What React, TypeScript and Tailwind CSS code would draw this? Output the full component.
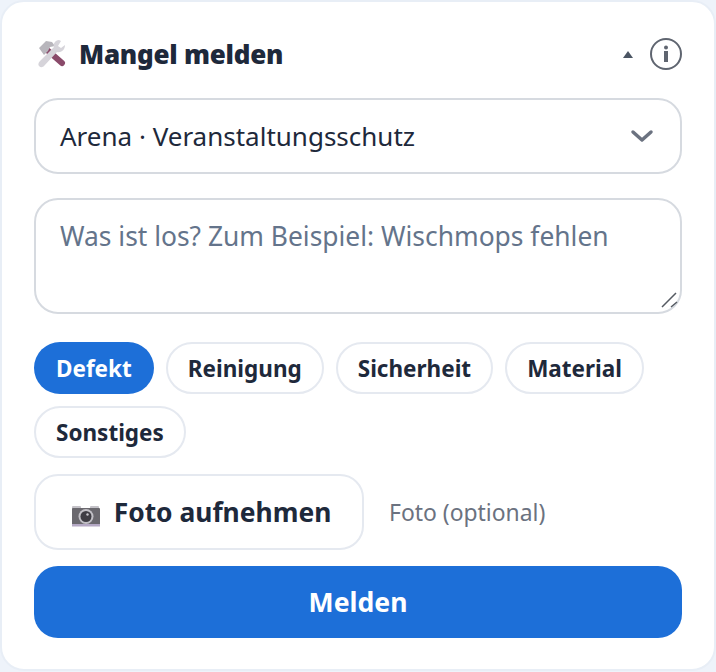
import React from 'react';

const categories = ['Defekt', 'Reinigung', 'Sicherheit', 'Material', 'Sonstiges'];

// Hammer and wrench, drawn because the installed emoji font looks different
const ToolsIcon = () => (
  <svg width="32" height="32" viewBox="0 0 32 32" className="ml-[1px]">
    <path d="M11 11 L27 25" stroke="#8a4a6a" strokeWidth="6" strokeLinecap="round" />
    <path d="M4 10 L11 3 L17 4 L20 8 L15 9 L13 13 L9 17 Z" fill="#b8b6bc" />
    <path d="M24 2 C20 2 18 6 19 9 L5 23 C3 25 3 27 4 28 C6 30 8 29 9 28 L22 14 C26 15 30 12 30 7 L26 10 L23 8 L26 3 Z" fill="#d6d4da" />
  </svg>
);

const CameraIcon = () => (
  <svg width="30" height="22" viewBox="0 0 30 22" className="translate-y-[3px]">
    <rect x="1" y="1" width="9" height="4" rx="1" fill="#c4c2c8" />
    <rect x="19" y="1" width="9" height="4" rx="1" fill="#c4c2c8" />
    <rect x="1" y="3" width="28" height="17" rx="1" fill="#6a686e" />
    <rect x="1" y="19" width="28" height="2.5" fill="#b4a8c4" />
    <circle cx="15" cy="11.5" r="7.5" fill="#c2c0c6" />
    <circle cx="15" cy="11.5" r="5.5" fill="#3f3d44" />
    <circle cx="16.5" cy="9.5" r="1.2" fill="#c8c6cc" />
  </svg>
);

const InfoIcon = () => (
  <svg width="32" height="32" viewBox="0 0 32 32">
    <circle cx="16" cy="16" r="15" fill="none" stroke="#5f6570" strokeWidth="2" />
    <circle cx="16" cy="9.5" r="2" fill="#5f6570" />
    <rect x="14" y="13" width="4" height="11" fill="#5f6570" />
  </svg>
);

const Chevron = () => (
  <svg width="24" height="14" viewBox="0 0 24 14">
    <path d="M3 3 L12 11 L21 3" fill="none" stroke="#6b7280" strokeWidth="3.5" strokeLinecap="round" strokeLinejoin="round" />
  </svg>
);

const ResizeGrip = () => (
  <svg width="22" height="22" viewBox="0 0 22 22" className="absolute right-0 bottom-0 pointer-events-none">
    <path d="M2 15 L16 1 M11 15 L17 10" stroke="#555a62" strokeWidth="1.5" />
  </svg>
);

export default function App() {
  return (
    <div className="w-[716px] h-[672px] bg-[#eef3fa] font-['Noto_Sans',sans-serif] overflow-hidden">
      <div className="h-[671px] rounded-[24px] border-2 border-[#e8eef6] bg-white px-[32px] pt-[32px] flex flex-col">
        <div className="flex items-center justify-between h-[40px]">
          <div className="flex items-center gap-[12px]">
            <ToolsIcon />
            <span className="text-[26px] font-black text-[#1e293b] tracking-[-0.25px]">Mangel melden</span>
          </div>
          <div className="flex items-center gap-[17px]">
            <span className="w-0 h-0 border-x-[5px] border-x-transparent border-b-[7px] border-b-[#4b5563]" />
            <InfoIcon />
          </div>
        </div>
        <div className="mt-[24px] h-[76px] rounded-[24px] border-2 border-[#d6dae0] flex items-center justify-between pl-[24px] pr-[26px] text-[26px] text-[#1e293b]">
          <span>Arena · Veranstaltungsschutz</span>
          <Chevron />
        </div>
        <div className="relative mt-[24px] h-[116px]">
          <textarea
            className="block w-full h-full resize-none rounded-[24px] border-2 border-[#d6dae0] px-[24px] pt-[17px] text-[26.4px] text-[#1e293b] placeholder:text-[#64748b] outline-none"
            placeholder="Was ist los? Zum Beispiel: Wischmops fehlen"
          />
          <ResizeGrip />
        </div>
        <div className="mt-[28px] flex flex-wrap gap-3">
          {categories.map((c, i) => (
            <span key={c} className={i === 0 ? 'h-[52px] px-[22px] pt-[2px] rounded-full bg-[#1d6fd8] text-white font-bold text-[22.5px] flex items-center' : 'h-[52px] px-[20px] pt-[2px] rounded-full border-2 border-[#e5e9f0] text-[#1e293b] font-bold text-[22.5px] flex items-center'}>{c}</span>
          ))}
        </div>
        <div className="mt-[16px] flex items-center gap-[25px]">
          <div className="h-[76px] w-[330px] pl-[4px] pt-[2px] rounded-[24px] border-2 border-[#e5e9f0] flex items-center justify-center gap-[13px] text-[26.4px] font-bold text-[#1e293b]">
            <CameraIcon /><span>Foto aufnehmen</span>
          </div>
          <span className="text-[22.9px] pt-[3px] text-[#6b7280]">Foto (optional)</span>
        </div>
        <div className="mt-[16px] h-[72px] pt-[2px] rounded-[24px] bg-[#1d6fd8] text-white font-bold text-[26.6px] flex items-center justify-center">Melden</div>
      </div>
    </div>
  );
}
